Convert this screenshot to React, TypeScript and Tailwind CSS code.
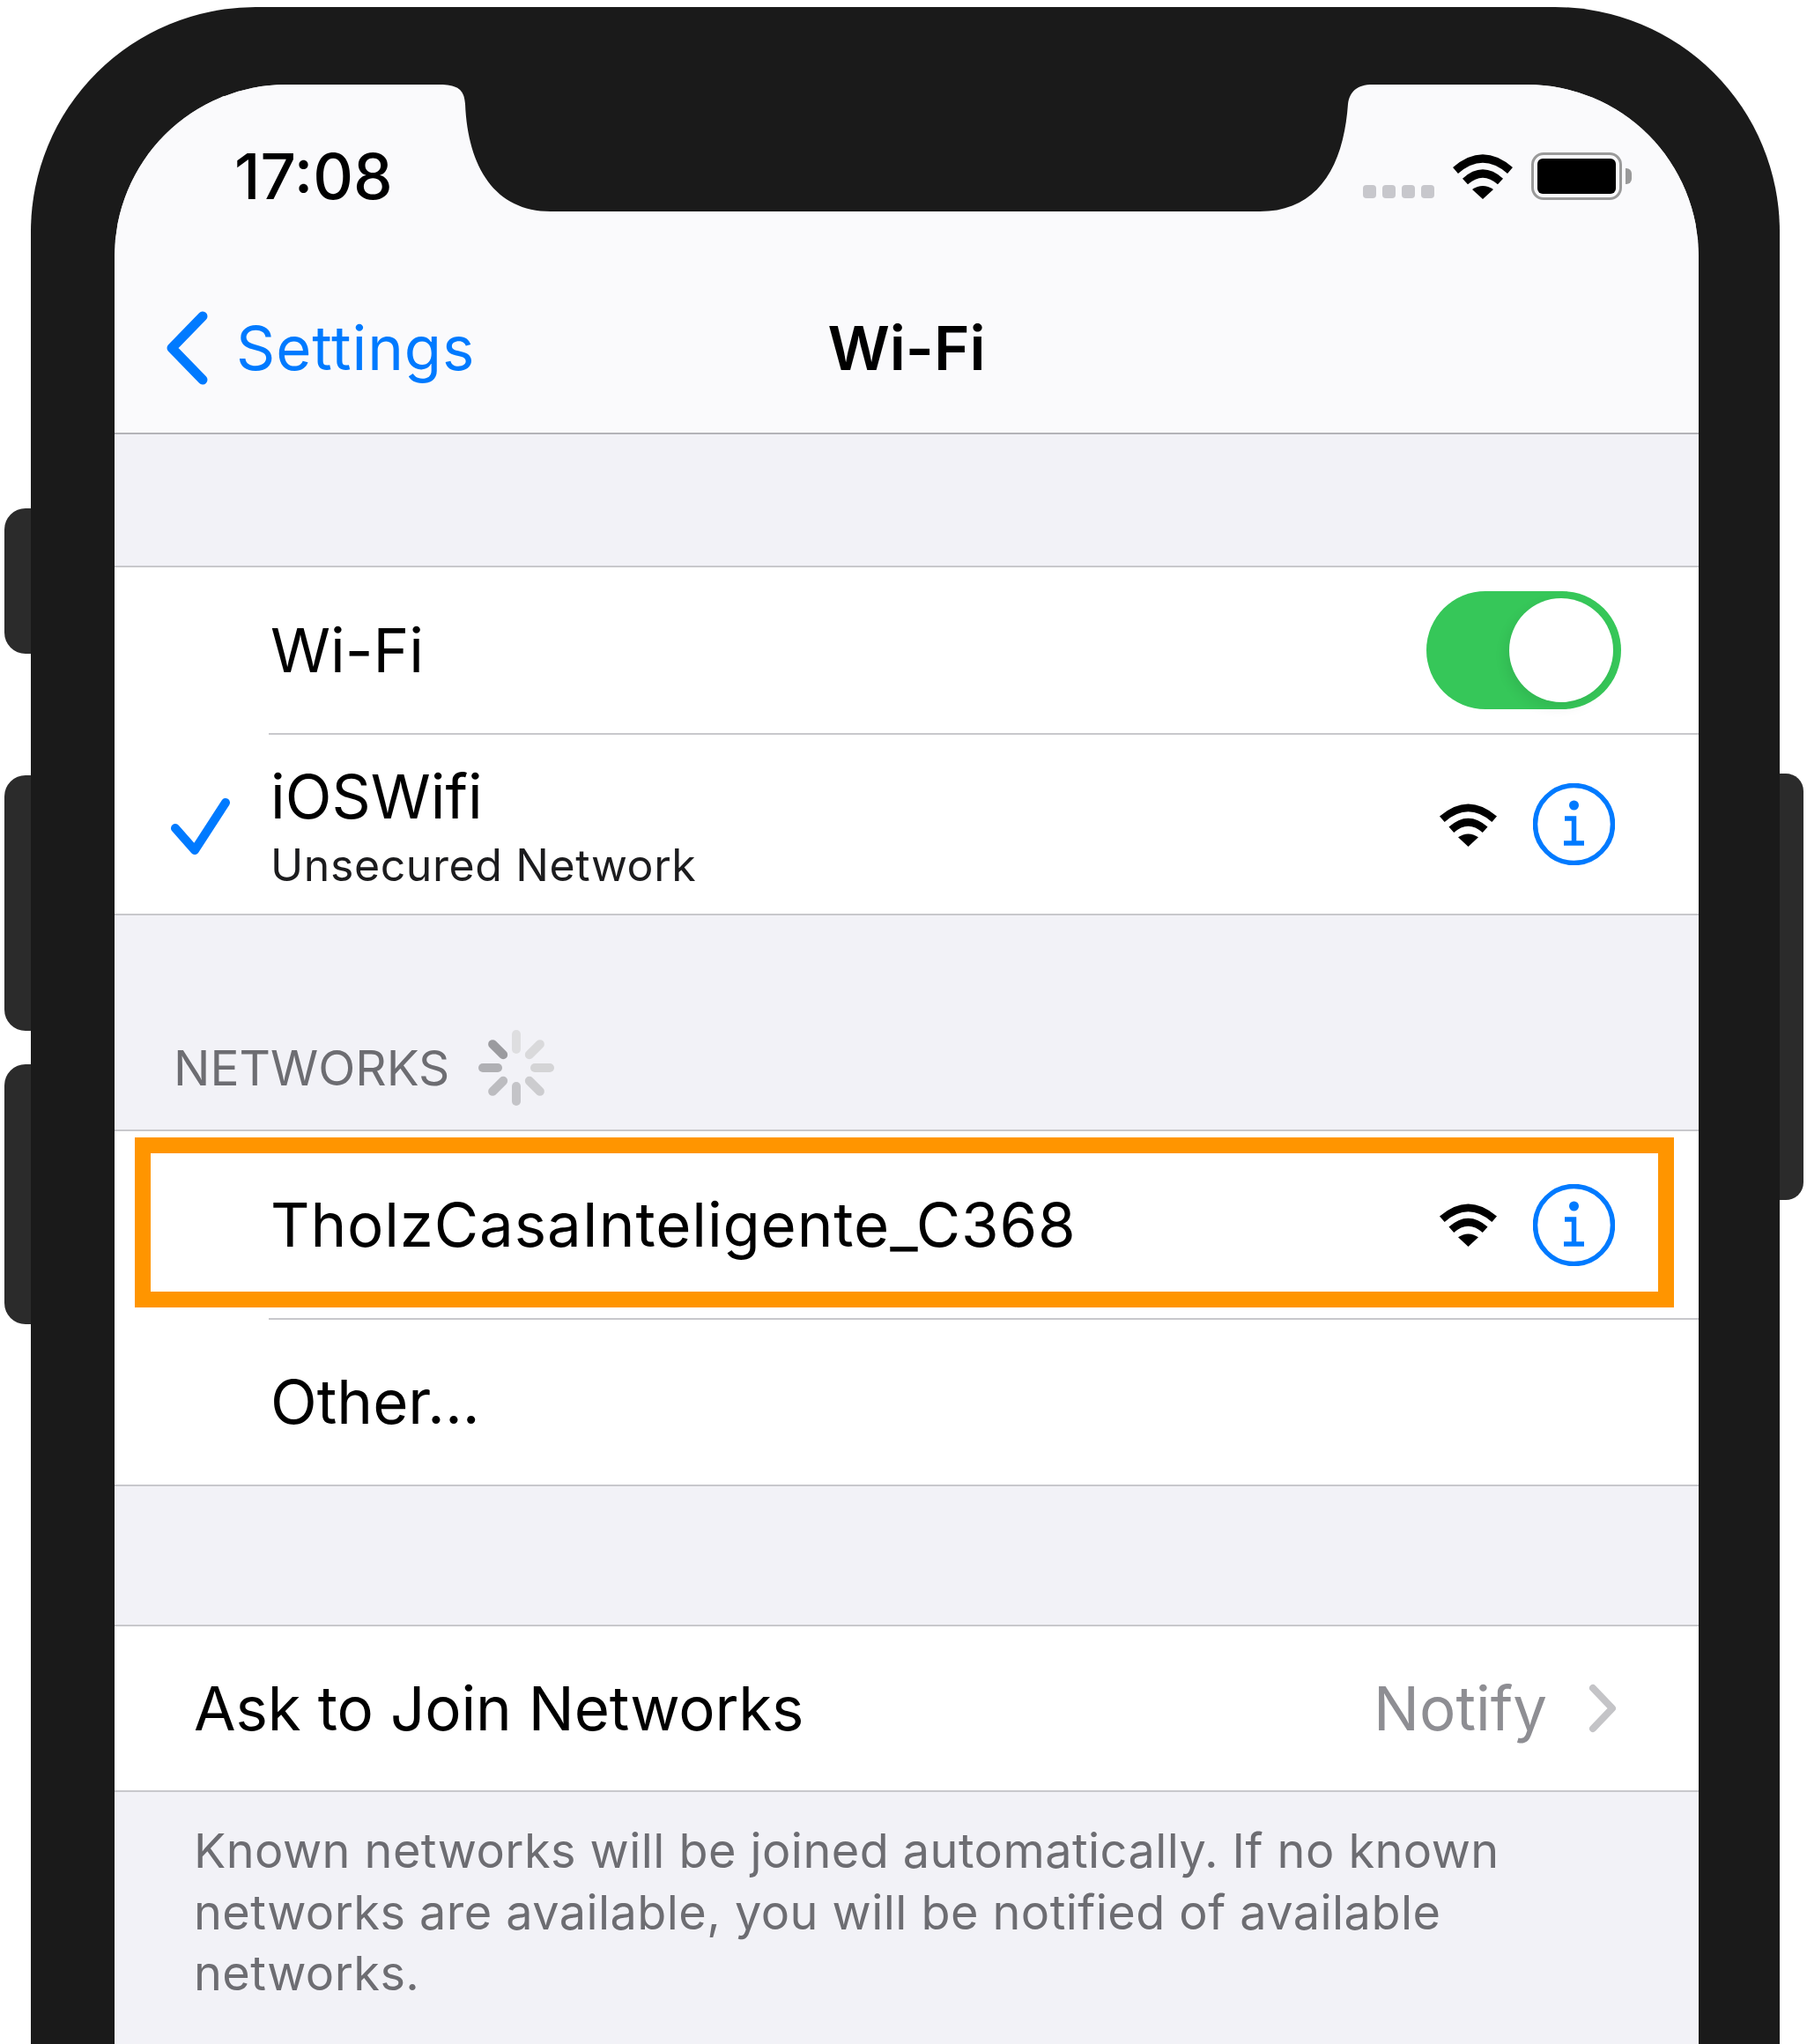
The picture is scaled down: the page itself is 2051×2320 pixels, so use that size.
const sans = 'font-["Inter","Liberation_Sans",sans-serif]';

function WifiIcon({ className }: { className: string }) {
  return (
    <svg viewBox="0 0 70 52" className={className}>
      <path d="M4 19.5Q35 -7.5 66 19.5" fill="none" stroke="#000" strokeWidth="9" />
      <path d="M15 32Q35 14 55 32" fill="none" stroke="#000" strokeWidth="9" />
      <path d="M23 41Q35 33 47 41L35 52Z" fill="#000" />
    </svg>
  );
}

function InfoIcon() {
  return (
    <svg viewBox="0 0 93 93" className="w-[93px] h-[93px] shrink-0">
      <circle cx="46.5" cy="46.5" r="44" fill="none" stroke="#007aff" strokeWidth="5.5" />
      <circle cx="46.5" cy="25" r="5.5" fill="#007aff" />
      <path d="M36 40H46.5V68M35 68H58" fill="none" stroke="#007aff" strokeWidth="5.5" />
    </svg>
  );
}

function Spinner() {
  const spokes = ["#dedee0", "#d9d9db", "#d4d4d6", "#cccccf", "#c4c4c8", "#bcbcc0", "#b0b0b4", "#9b9b9f"];
  return (
    <svg viewBox="0 0 88 88" className="w-[88px] h-[88px] ml-[32px]">
      {spokes.map((c, i) => (
        <line key={i} x1="44" y1="6" x2="44" y2="23" stroke={c} strokeWidth="10" strokeLinecap="round" transform={`rotate(${i * 45} 44 44)`} />
      ))}
    </svg>
  );
}

function Divider() {
  return <div className="h-[2px] ml-[175px] bg-[#c8c8cc]" />;
}

export default function App() {
  return (
    <div className={`relative w-[2051px] h-[2320px] overflow-hidden bg-white ${sans}`}>
      <div className="absolute left-[5px] top-[577px] w-[40px] h-[165px] rounded-l-[24px] bg-[#2b2b2b]" />
      <div className="absolute left-[5px] top-[880px] w-[40px] h-[290px] rounded-l-[24px] bg-[#2b2b2b]" />
      <div className="absolute left-[5px] top-[1208px] w-[40px] h-[295px] rounded-l-[24px] bg-[#2b2b2b]" />
      <div className="absolute left-[2005px] top-[878px] w-[42px] h-[484px] rounded-r-[20px] bg-[#2b2b2b]" />

      <div className="relative ml-[35px] mt-[8px] w-[1985px] h-[2312px] rounded-t-[255px] bg-[#1a1a1a] pl-[95px] pr-[92px] pt-[88px]">
        <div className="relative h-full overflow-hidden rounded-t-[195px] bg-[#f2f2f7]">
          <header className="h-[397px] border-b-2 border-[#b4b4b8] bg-[#fafafc]">
            <div className="h-[208px] flex items-center justify-between pl-[136px] pr-[76px]">
              <span className="text-[71px] leading-none font-medium text-black">17:08</span>
              <div className="flex items-center gap-[20px]">
                <div className="flex gap-[7px] mt-[34px]">
                  <div className="w-[15px] h-[15px] rounded-[4px] bg-[#c7c7cc]" />
                  <div className="w-[15px] h-[15px] rounded-[4px] bg-[#c7c7cc]" />
                  <div className="w-[15px] h-[15px] rounded-[4px] bg-[#c7c7cc]" />
                  <div className="w-[15px] h-[15px] rounded-[4px] bg-[#c7c7cc]" />
                </div>
                <WifiIcon className="w-[70px] h-[52px]" />
                <div className="flex items-center gap-[4px]">
                  <div className="w-[103px] h-[54px] rounded-[14px] border-[3px] border-[#9a9a9a] p-[4px]">
                    <div className="w-full h-full rounded-[6px] bg-black" />
                  </div>
                  <div className="w-[7px] h-[18px] rounded-r-[6px] bg-[#9a9a9a]" />
                </div>
              </div>
            </div>
            <div className="grid grid-cols-3 items-center h-[182px]">
              <div className="flex items-center pl-[58px] gap-[30px]">
                <svg viewBox="0 0 50 84" className="w-[50px] h-[84px] shrink-0">
                  <path d="M42 6L7 42L42 78" fill="none" stroke="#007aff" strokeWidth="11" strokeLinecap="round" strokeLinejoin="round" />
                </svg>
                <span className="text-[#007aff] text-[69px] leading-none tracking-[0.9px]">Settings</span>
              </div>
              <div className="text-center text-black text-[69px] leading-none font-semibold">Wi-Fi</div>
              <div />
            </div>
          </header>

          <div className="h-[149px]" />

          <section className="bg-white border-y-2 border-[#c8c8cc]">
            <div className="h-[188px] flex items-center justify-between pl-[177px] pr-[88px]">
              <span className="text-[69px] leading-none text-black">Wi-Fi</span>
              <div className="relative w-[221px] h-[134px] rounded-full bg-[#36c759]">
                <div className="absolute right-[9px] top-[8px] w-[118px] h-[118px] rounded-full bg-white shadow-[-4px_6px_14px_rgba(0,0,0,0.08)]" />
              </div>
            </div>
            <Divider />
            <div className="h-[203px] flex items-center pr-[95px]">
              <svg viewBox="0 0 70 70" className="w-[70px] h-[70px] ml-[64px] mr-[43px] shrink-0">
                <path d="M5 39L27 64L62 10" fill="none" stroke="#007aff" strokeWidth="10" strokeLinecap="round" strokeLinejoin="round" />
              </svg>
              <div className="flex-1 flex flex-col gap-[13px] mt-[4px]">
                <span className="text-[69px] leading-[76px] text-black">iOSWifi</span>
                <span className="text-[50px] leading-[54px] text-[#1c1c1e] tracking-[0.6px]">Unsecured Network</span>
              </div>
              <WifiIcon className="w-[67px] h-[50px] mr-[40px]" />
              <InfoIcon />
            </div>
          </section>

          <div className="h-[243px] flex items-end pl-[67px] pb-[26px]">
            <span className="text-[55px] leading-[88px] text-[#6d6d72]">NETWORKS</span>
            <Spinner />
          </div>

          <section className="bg-white border-y-2 border-[#c8c8cc]">
            <div className="relative h-[212px] flex items-center pl-[177px] pr-[95px]">
              <div className="absolute left-[23px] top-[7px] w-[1747px] h-[193px] border-[18px] border-[#ff9500]" />
              <span className="flex-1 text-[69px] leading-none text-black tracking-[0.85px]">TholzCasaInteligente_C368</span>
              <WifiIcon className="w-[67px] h-[50px] mr-[40px]" />
              <InfoIcon />
            </div>
            <Divider />
            <div className="h-[187px] flex items-center pl-[177px]">
              <span className="text-[69px] leading-none text-black">Other...</span>
            </div>
          </section>

          <div className="h-[157px]" />

          <section className="bg-white border-y-2 border-[#c8c8cc] h-[190px] flex items-center pl-[90px] pr-[93px]">
            <span className="flex-1 text-[69px] leading-none text-black tracking-[-0.15px]">Ask to Join Networks</span>
            <span className="text-[69px] leading-none text-[#8e8e93]">Notify</span>
            <svg viewBox="0 0 32 56" className="w-[32px] h-[56px] ml-[47px]">
              <path d="M5 5L27 28L5 51" fill="none" stroke="#c4c4c7" strokeWidth="8" strokeLinecap="round" strokeLinejoin="round" />
            </svg>
          </section>

          <p className="pl-[90px] pt-[32px] text-[54px] leading-[69.5px] text-[#6d6d72] tracking-[0.45px]">
            Known networks will be joined automatically. If no known
            <br />
            networks are available, you will be notified of available
            <br />
            networks.
          </p>

          <svg viewBox="0 0 1060 150" className="absolute left-[370px] top-0 w-[1060px] h-[150px]">
            <path d="M0 0C22 0 27 8 28 22C31 94 62 144 125 144L930 144C995 144 1025 94 1030 22C1032 8 1040 0 1058 0Z" fill="#1a1a1a" />
          </svg>
        </div>
      </div>
    </div>
  );
}
